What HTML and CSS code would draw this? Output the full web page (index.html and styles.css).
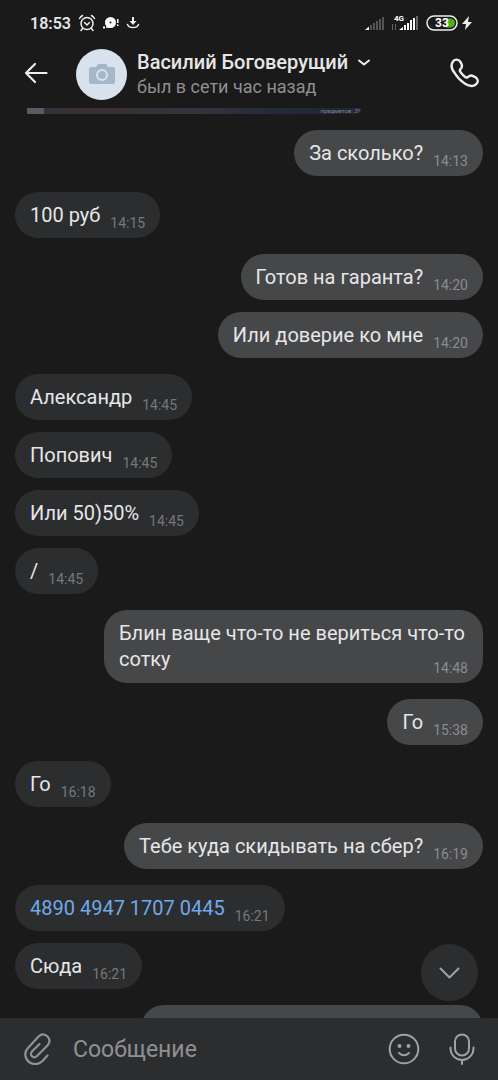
FILE: index.html
```html
<!DOCTYPE html>
<html lang="ru">

<head>
    <meta charset="UTF-8">
    <meta name="viewport" content="width=device-width, initial-scale=1.0">
    <title>Сообщения</title>
    <link rel="stylesheet" href="styles.css">
</head>

<body>
    <div class="app">
        <div class="status">
            <div class="status-left">
                <span class="clock">18:53</span>
                <!-- alarm -->
                <svg width="18" height="18" viewBox="0 0 18 18" fill="none" stroke="#eee" stroke-width="1.5" stroke-linecap="round">
                    <circle cx="9" cy="9.5" r="6" />
                    <path d="M1.5 4.5A8 8 0 0 1 4.5 1.5M13.5 1.5a8 8 0 0 1 3 3M4.5 14.5l-1.5 2M13.5 14.5l1.5 2M6.5 8.5l2.5 2.5 2.5-2.5" />
                </svg>
                <svg width="16" height="14" viewBox="0 0 16 14" fill="#fff">
                    <circle cx="7.5" cy="6.5" r="5.5" />
                    <circle cx="7.5" cy="6.5" r="1" fill="#1a1a1a" />
                    <path d="M4 9l-1 3 4-.5zM14 3h1.5v4H14zM14 8.500h1.500V10H14zM0 10.500h2v2H0z" />
                </svg>
                <svg width="14" height="14" viewBox="0 0 14 14" fill="none" stroke="#eee" stroke-width="1.6" stroke-linecap="round">
                    <path d="M1.500 8.500a5.800 4.500 0 0 0 11 0" />
                    <path d="M6 1h2v4h2.500L7 9 3.500 5H6z" fill="#eee" stroke="none" />
                </svg>
            </div>
            <div class="status-right">
                <svg width="20" height="14" viewBox="0 0 20 14" fill="#555">
                    <path d="M1 14l4-3.500V14z" fill="#fff" />
                    <path d="M6 9h2v5H6zM9 7h2v7H9zM12 5h2v9h-2zM15 3h2v11h-2zM18 1h2v13h-2z" />
                </svg>
                <svg width="28" height="16" viewBox="0 0 28 16" fill="#fff">
                    <text x="3" y="6" class="net">4G</text>
                    <path d="M8 15l4-3v3zM13 10h2v5h-2zM16 8h2v7h-2zM19 5h2v10h-2zM22 3h2v12h-2z" />
                    <path d="M25 1h2v14h-2zM1 9h1v6H1zM4 9h1v6H4z" fill="#666" />
                </svg>
                <div class="battery">
                    <svg width="32" height="16" viewBox="0 0 32 16">
                        <rect x="1" y="1" width="30" height="14" rx="7" fill="none" stroke="#eee" stroke-width="1.500" />
                        <path d="M20 3.500h4.500a4.500 4.500 0 0 1 0 9H20z" fill="#4caf1a" />
                        <text x="9" y="12" class="charge">33</text>
                    </svg>
                    <svg width="10" height="14" viewBox="0 0 10 14" fill="#eee">
                        <path d="M7 0L0 8h4L3 14l7-8H6z" />
                    </svg>
                </div>
            </div>
        </div>

        <header class="header">
            <button class="icon-btn back" aria-label="Назад">
                <svg width="24" height="24" viewBox="0 0 24 24" fill="none" stroke="#eee" stroke-width="2.200" stroke-linecap="round" stroke-linejoin="round">
                    <path d="M22.500 11H2M11 2L2 11l9 9" />
                </svg>
            </button>
            <div class="avatar">
                <svg width="26" height="20" viewBox="0 0 26 20">
                    <path d="M2 3h5l2-3h8l2 3h5q2 0 2 2v13q0 2-2 2H2q-2 0-2-2V5q0-2 2-2z" fill="#a6b7c8" />
                    <circle cx="13" cy="11" r="5" fill="none" stroke="#d8e2ec" stroke-width="2" />
                </svg>
            </div>
            <div class="peer">
                <button class="name">Василий Боговерущий
                    <svg width="15" height="8" viewBox="0 0 15 8" fill="none" stroke="#eee" stroke-width="2" stroke-linecap="round" stroke-linejoin="round">
                        <path d="M3 2.500l5 4 5-4" />
                    </svg>
                </button>
                <div class="seen">был в сети час назад</div>
            </div>
            <button class="icon-btn call" aria-label="Позвонить">
                <svg width="30" height="32" viewBox="0 0 30 32" fill="none" stroke="#eee" stroke-width="2.400" stroke-linejoin="round">
                    <path d="M3 3.500C5 1 8.500.8 10.500 4l1 2c1 2.300.4 3.800-1 5.200-1 1-.8 1.800 0 3 1.300 1.900 2.800 3.400 4.700 4.700 1.200.8 2 1 3 0 1.400-1.400 3-1.800 5-.8l2.300 1.200c3 2 3 5 .5 7-2.500 2.200-6.500 2.200-11-.6-4-2.500-7.600-6.200-10-10.200C1.300 11 .8 6.500 3 3.500z" />
                </svg>
            </button>
        </header>

        <main class="chat">
            <div class="photo">
                <div class="photo-thumb"></div>
                <div class="photo-text">предметов: 39</div>
            </div>
            <div class="group out">
                <div class="msg"><p>За сколько?</p><time>14:13</time></div>
            </div>
            <div class="group">
                <div class="msg"><p>100 руб</p><time>14:15</time></div>
            </div>
            <div class="group out">
                <div class="msg"><p>Готов на гаранта?</p><time>14:20</time></div>
                <div class="msg"><p>Или доверие ко мне</p><time>14:20</time></div>
            </div>
            <div class="group">
                <div class="msg"><p>Александр</p><time>14:45</time></div>
                <div class="msg"><p>Попович</p><time>14:45</time></div>
                <div class="msg"><p>Или 50)50%</p><time>14:45</time></div>
                <div class="msg"><p>/</p><time>14:45</time></div>
            </div>
            <div class="group out">
                <div class="msg long"><p>Блин ваще что-то не вериться что-то сотку<time>14:48</time></p></div>
            </div>
            <div class="group out">
                <div class="msg"><p>Го</p><time>15:38</time></div>
            </div>
            <div class="group">
                <div class="msg"><p>Го</p><time>16:18</time></div>
            </div>
            <div class="group out">
                <div class="msg"><p>Тебе куда скидывать на сбер?</p><time>16:19</time></div>
            </div>
            <div class="group">
                <div class="msg"><p><a href="#">4890 4947 1707 0445</a></p><time>16:21</time></div>
                <div class="msg"><p>Сюда</p><time>16:21</time></div>
            </div>
            <div class="group out">
                <div class="msg next"></div>
            </div>
            <button class="scroll-down" aria-label="Вниз">
                <svg width="22" height="12" viewBox="0 0 22 12" fill="none" stroke="#a0a1a4" stroke-width="2" stroke-linecap="round" stroke-linejoin="round">
                    <path d="M1.500 1.500l9 9 9-9" />
                </svg>
            </button>
        </main>

        <form class="composer">
            <button type="button" class="icon-btn" aria-label="Прикрепить">
                <svg width="28" height="32" viewBox="0 0 28 32" fill="none" stroke="#909195" stroke-width="2.200" stroke-linecap="round" stroke-linejoin="round">
                    <path d="M24.500 22.500l-5 5.500c-4 4-9.500 4-13.500 1-4.500-3.500-5-10-1-14L15.500 3.500c3-2.700 6.500-2.500 9 0s2.500 6 0 9L14 23c-1.800 1.600-3.800 1.500-5 .3-1.500-1.500-1.300-3.500.2-5l7.300-7.300" />
                </svg>
            </button>
            <input type="text" class="field" placeholder="Сообщение" aria-label="Сообщение">
            <button type="button" class="icon-btn" aria-label="Смайлы">
                <svg width="32" height="32" viewBox="0 0 32 32" fill="none" stroke="#a0a1a4" stroke-width="2" stroke-linecap="round">
                    <circle cx="16" cy="16" r="14.300" />
                    <path d="M11 20q5 4.500 10 0" />
                    <circle cx="11.500" cy="13" r="2" fill="#a0a1a4" stroke="none" />
                    <circle cx="20.500" cy="13" r="2" fill="#a0a1a4" stroke="none" />
                </svg>
            </button>
            <button type="button" class="icon-btn mic" aria-label="Голосовое сообщение">
                <svg width="26" height="32" viewBox="0 0 26 32" fill="none" stroke="#a0a1a4" stroke-width="2" stroke-linecap="round">
                    <rect x="6" y="1.500" width="14" height="21" rx="7" />
                    <path d="M1.500 14.500v1a11.500 11.500 0 0 0 23 0v-1M13 27v4" />
                </svg>
            </button>
        </form>
    </div>
</body>

</html>
```

FILE: styles.css
```css
* {
    padding: 0;
    margin: 0;
    box-sizing: border-box;
}

body {
    background-color: #1a1a1a;
    color: #e6e6e8;
    font-family: Roboto, "Noto Sans", sans-serif;
}

button {
    border: none;
    background: none;
    color: inherit;
    font-family: inherit;
    cursor: pointer;
}

svg {
    display: block;
    flex-shrink: 0;
}

.app {
    display: flex;
    flex-direction: column;
    height: 100vh;
}

/* status bar */
.status {
    display: flex;
    justify-content: space-between;
    align-items: center;
    height: 44px;
    padding: 2px 26px 0 30px;
}

.status-left,
.status-right {
    display: flex;
    align-items: center;
    gap: 7px;
}

.battery {
    display: flex;
    align-items: center;
    gap: 4px;
}

.clock {
    font-size: 16px;
    font-weight: 600;
}

.net {
    font-size: 8px;
    font-weight: 700;
}

.charge {
    font-size: 12px;
    font-weight: 700;
    fill: #fff;
}

/* header */
.header {
    display: flex;
    align-items: center;
    height: 64px;
    padding: 0 18px 4px 24px;
}

.icon-btn {
    display: flex;
    align-items: center;
    justify-content: center;
}

.avatar {
    display: flex;
    align-items: center;
    justify-content: center;
    width: 51px;
    height: 51px;
    margin: 0 10px 0 28px;
    border-radius: 50%;
    background-color: #d8e2ec;
}

.peer {
    flex: 1;
}

.name {
    display: flex;
    align-items: center;
    gap: 8px;
    font-size: 20px;
    font-weight: 500;
    line-height: 25px;
    white-space: nowrap;
}

.seen {
    color: #8e8f92;
    font-size: 18px;
    line-height: 24px;
}

/* messages */
.chat {
    position: relative;
    display: flex;
    flex-direction: column;
    flex: 1;
    gap: 16px;
    min-height: 0;
    overflow: hidden;
    padding: 0 15px;
}

.photo {
    display: flex;
    justify-content: space-between;
    flex-shrink: 0;
    width: 334px;
    height: 6px;
    margin-left: 12px;
    overflow: hidden;
    border-radius: 0 0 6px 0;
    background: linear-gradient(90deg, #34313b, #3a2e34 20%, #34343d 50%, #232a38 75%, #202733);
}

.photo-thumb {
    width: 17px;
    background-color: #5b5966;
}

.photo-text {
    color: #7d838e;
    font-size: 6px;
    line-height: 6px;
}

.group {
    display: flex;
    flex-direction: column;
    flex-shrink: 0;
    align-items: flex-start;
    gap: 12px;
}

.msg {
    display: flex;
    align-items: flex-end;
    gap: 10px;
    max-width: 379px;
    padding: 10px 15px;
    border-radius: 23px;
    background-color: #2c2d2f;
    font-size: 20px;
    line-height: 26px;
}

.out {
    align-items: flex-end;
}

.out .msg {
    background-color: #464749;
}

.msg a {
    color: #71aaeb;
    text-decoration: none;
}

.msg time {
    margin-bottom: -3px;
    color: #76787a;
    font-size: 14px;
    line-height: 16px;
}

.out .msg time {
    color: #8b8c8f;
}

/* time goes to the end of the last line */
.long time {
    float: right;
    margin-top: 14px;
}

.msg.next {
    width: 342px;
    height: 46px;
}

.scroll-down {
    position: absolute;
    right: 20px;
    bottom: 17px;
    display: flex;
    align-items: center;
    justify-content: center;
    width: 57px;
    height: 57px;
    border-radius: 50%;
    background-color: #2c2d2f;
}

/* composer */
.composer {
    display: flex;
    align-items: center;
    flex-shrink: 0;
    height: 62px;
    padding: 0 23px;
    background-color: #2c2d2f;
}

.field {
    flex: 1;
    min-width: 0;
    margin: 0 22px;
    border: none;
    outline: none;
    background: none;
    color: #e6e6e8;
    font-family: inherit;
    font-size: 23px;
}

.field::placeholder {
    color: #909195;
}

.mic {
    margin-left: 29px;
}
```
